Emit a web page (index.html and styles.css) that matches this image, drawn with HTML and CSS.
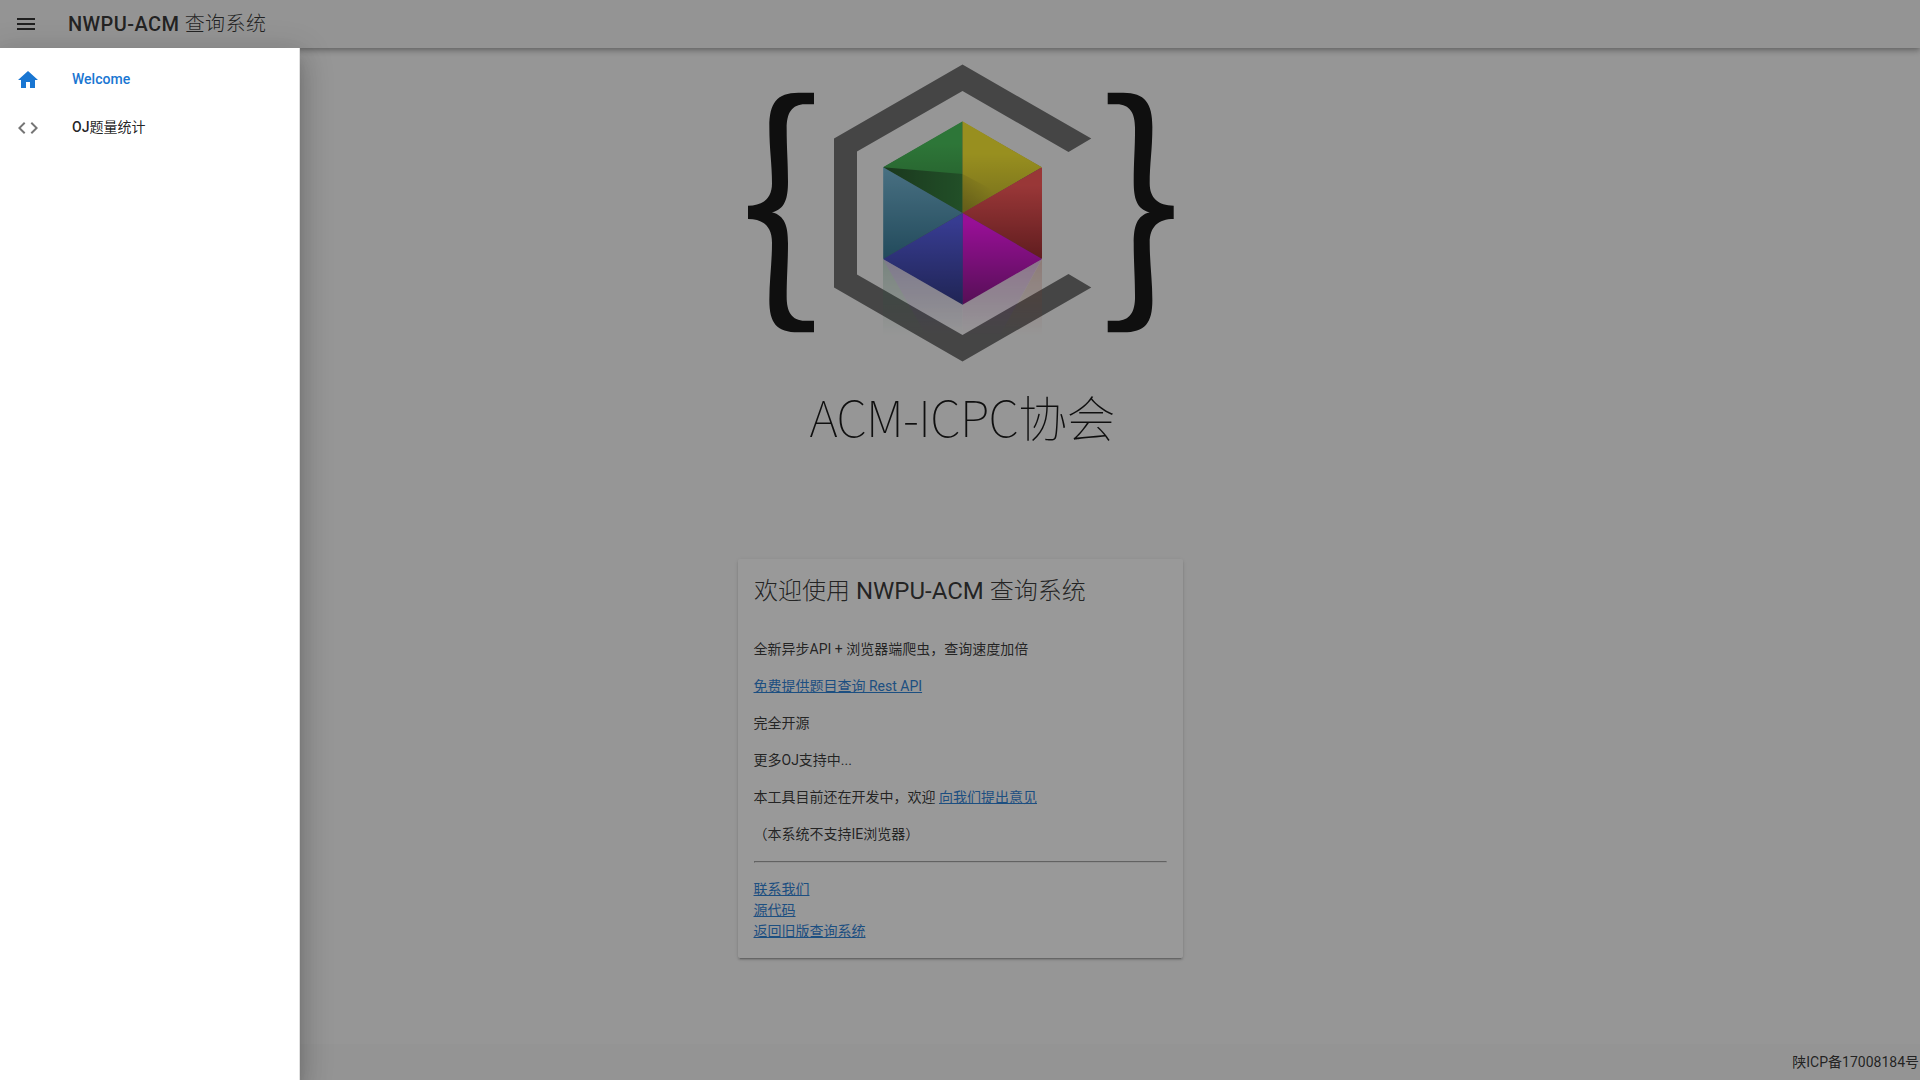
FILE: index.html
```html
<!DOCTYPE html>
<html lang="zh-CN">
<head>
<meta charset="utf-8">
<title>NWPU-ACM 查询系统</title>
<link rel="stylesheet" href="styles.css">
</head>
<body>
<div class="app">
  <header class="toolbar">
    <svg class="icon" viewBox="0 0 24 24"><path d="M3 18h18v-2H3v2zm0-5h18v-2H3v2zm0-7v2h18V6H3z"/></svg>
    <h1 class="toolbar-title">NWPU-ACM <span class="thin">查询系统</span></h1>
  </header>
  <main class="content">
    <svg class="logo" viewBox="738 48 445 511">
      <defs>
        <linearGradient id="green" x1="0" y1="0" x2="0" y2="1"><stop offset=".25" stop-color="#39be4c"/><stop offset="1" stop-color="#23812e"/></linearGradient>
        <linearGradient id="yellow" x1="0" y1="0" x2="0" y2="1"><stop offset=".35" stop-color="#fded1f"/><stop offset="1" stop-color="#beaf18"/></linearGradient>
        <linearGradient id="red" x1="0" y1="0" x2="0" y2="1"><stop offset=".2" stop-color="#ff4a4b"/><stop offset="1" stop-color="#961a1e"/></linearGradient>
        <linearGradient id="magenta" x1="0" y1="0" x2="0" y2="1"><stop offset=".1" stop-color="#fd01fa"/><stop offset="1" stop-color="#820082"/></linearGradient>
        <linearGradient id="blue" x1="0" y1="0" x2="0" y2="1"><stop offset=".1" stop-color="#4b53f0"/><stop offset="1" stop-color="#1f2880"/></linearGradient>
        <linearGradient id="teal" x1="0" y1="0" x2="0" y2="1"><stop offset="0" stop-color="#6bb4d5"/><stop offset="1" stop-color="#246e8e"/></linearGradient>
        <linearGradient id="shade" gradientUnits="userSpaceOnUse" x1="962" y1="200" x2="990" y2="186"><stop offset="0" stop-color="#000" stop-opacity=".17"/><stop offset="1" stop-color="#000" stop-opacity="0"/></linearGradient>
        <linearGradient id="wedge" x1="0" y1="0" x2="1" y2="0"><stop offset="0" stop-color="#164c1b"/><stop offset="1" stop-color="#23772e"/></linearGradient>
        <linearGradient id="fade" x1="0" y1="0" x2="0" y2="1"><stop offset="0" stop-color="#fff" stop-opacity=".28"/><stop offset="1" stop-color="#fff" stop-opacity="0"/></linearGradient>
        <mask id="mirror"><rect x="880" y="255" width="166" height="82" fill="url(#fade)"/></mask>
        <path id="brace" d="M252 128H205C140 128 118 160 118 230C118 300 126 340 126 400C126 445 100 467 54 467V507C100 507 126 530 126 578C126 640 118 690 118 750C118 820 140 847 205 847H252V812H225C185 812 170 785 170 740C170 680 174 640 174 580C174 530 165 497 126 487C165 477 174 445 174 395C174 330 170 300 170 235C170 190 185 163 225 163H252Z"/>
      </defs>
      <use href="#brace" transform="translate(730 50) scale(.33333)"/>
      <use href="#brace" transform="translate(1191.7 50) scale(-.33333 .33333)"/>
      <path fill="#656565" d="M962.5 64.5L834 138.5V287.5L962.5 361.5L1091.3 287.5L1068.5 274L962.5 335L857 274.5V151.5L962.5 91L1068.5 152L1091.3 138.5Z"/>
      <g mask="url(#mirror)">
        <path fill="#268055" d="M883 259V337H943Z"/>
        <path fill="#5030b0" d="M883 259L962.5 304.5V337H927Z"/>
        <path fill="#b010b0" d="M1042 259L962.5 304.5V337H999Z"/>
        <path fill="#c04020" d="M1042 259V337H999Z"/>
      </g>
      <path fill="#5a3a80" d="M962.5 122L1041 167V259L962.5 303.500L884 259V167Z"/>
      <path fill="url(#green)" d="M962.7 213V121.300L883 167.300Z"/>
      <path fill="url(#wedge)" d="M883 167.300L962.7 174V213.300Z"/>
      <path fill="url(#yellow)" d="M962.5 213.300V121.300L1042 167.300Z"/>
      <path fill="url(#shade)" d="M962.5 213V174L993 190V195.500Z"/>
      <path fill="url(#red)" d="M962.5 213L1042 167.300V259Z"/>
      <path fill="url(#magenta)" d="M962.5 213L1042 259L962.5 304.700Z"/>
      <path fill="url(#blue)" d="M962.700 213V304.700L883 259Z"/>
      <path fill="url(#teal)" d="M962.500 213L883.200 259V167.300Z"/>
      <text class="logo-text" x="809.5" y="436.500" textLength="306">ACM-ICPC协会</text>
    </svg>
    <section class="card">
      <h2 class="headline"><span class="thin">欢迎使用</span> NWPU-ACM <span class="thin">查询系统</span></h2>
      <div class="card-text">
        <p>全新异步API + 浏览器端爬虫，查询速度加倍</p>
        <p><a href="#">免费提供题目查询 Rest API</a></p>
        <p>完全开源</p>
        <p>更多OJ支持中...</p>
        <p>本工具目前还在开发中，欢迎 <a href="#">向我们提出意见</a></p>
        <p>（本系统不支持IE浏览器）</p>
        <hr>
        <div><a href="#">联系我们</a></div>
        <div><a href="#">源代码</a></div>
        <div><a href="#">返回旧版查询系统</a></div>
      </div>
    </section>
  </main>
  <footer class="footer">陕ICP备17008184号</footer>
  <div class="overlay"></div>
  <nav class="drawer">
    <a class="item active" href="#">
      <svg class="icon" viewBox="0 0 24 24"><path d="M10 20v-6h4v6h5v-8h3L12 3 2 12h3v8z"/></svg>
      <span class="label">Welcome</span>
    </a>
    <a class="item" href="#">
      <svg class="icon" viewBox="0 0 24 24"><path d="M9.400 16.600L4.800 12l4.600-4.600L8 6l-6 6 6 6 1.400-1.400zm5.200 0l4.600-4.600-4.600-4.600L16 6l6 6-6 6-1.400-1.400z"/></svg>
      <span class="label">OJ<span class="cjk">题量统计</span></span>
    </a>
  </nav>
</div>
</body>
</html>
```
FILE: styles.css
```css
* { box-sizing: border-box; }
body {
  margin: 0;
  font: 14px/21px Roboto, "Noto Sans CJK SC", sans-serif;
  color: rgba(0, 0, 0, .87);
}
.app {
  position: relative;
  display: flex;
  flex-direction: column;
  height: 100vh;
  overflow: hidden;
  background: #fafafa;
}
.icon { width: 24px; height: 24px; flex: none; fill: currentColor; }
.thin { font-weight: 300; }
.cjk { font-weight: 400; }
.toolbar {
  display: flex;
  align-items: center;
  gap: 30px;
  height: 48px;
  flex: none;
  padding: 0 14px;
  background: #f5f5f5;
  box-shadow: 0 2px 4px -1px rgba(0,0,0,.2), 0 4px 5px rgba(0,0,0,.14), 0 1px 10px rgba(0,0,0,.12);
}
.toolbar-title {
  margin: 0;
  font-size: 20px;
  line-height: 24px;
  font-weight: 500;
  letter-spacing: .02em;
}
.content {
  flex: 1;
  display: flex;
  flex-direction: column;
  align-items: center;
  padding-left: 1px;
}
.logo { width: 445px; height: 511px; flex: none; }
.logo-text { font: 100 49px "Noto Sans CJK SC", sans-serif; }
.card {
  width: 445px;
  background: #fff;
  border-radius: 2px;
  box-shadow: 0 3px 1px -2px rgba(0,0,0,.2), 0 2px 2px rgba(0,0,0,.14), 0 1px 5px rgba(0,0,0,.12);
}
.headline {
  margin: 0;
  padding: 16px;
  font-size: 24px;
  line-height: 32px;
  font-weight: 400;
}
.card-text { padding: 16px 16px 16px 15.5px; }
.card-text p { margin: 0 0 16px; }
.card-text a { color: #1976d2; text-decoration: underline; }
.card-text hr { margin: 0 0 16px .5px; }
.footer {
  display: flex;
  align-items: center;
  justify-content: flex-end;
  height: 36px;
  flex: none;
  padding-right: 1px;
  background: #f5f5f5;
}
.overlay {
  position: absolute;
  inset: 0;
  background: #212121;
  opacity: .46;
}
.drawer {
  position: absolute;
  top: 48px;
  left: 0;
  bottom: 0;
  width: 300px;
  padding: 8px 0;
  background: #fff;
  border-right: 1px solid rgba(0,0,0,.12);
  box-shadow: 0 8px 10px -5px rgba(0,0,0,.2), 0 16px 24px 2px rgba(0,0,0,.14), 0 6px 30px 5px rgba(0,0,0,.12);
}
.item {
  display: flex;
  align-items: center;
  gap: 32px;
  height: 48px;
  padding: 0 16px;
  font-weight: 500;
  color: rgba(0,0,0,.87);
  text-decoration: none;
}
.item .icon { color: rgba(0,0,0,.54); }
.label { padding-bottom: 2px; }
.active, .item.active .icon { color: #1976d2; }
```
